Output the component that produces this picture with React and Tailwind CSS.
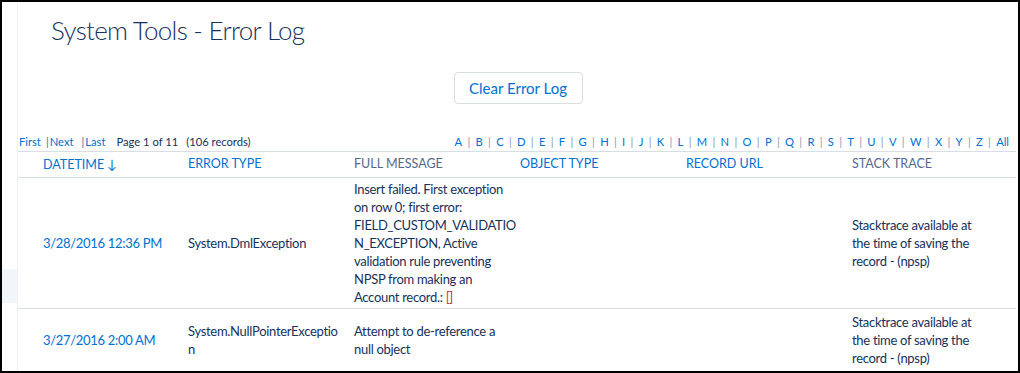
import React from "react";

const letters = "ABCDEFGHIJKLMNOPQRSTUVWXYZ".split("");

const rows = [
  {
    date: "3/28/2016 12:36 PM",
    type: "System.DmlException",
    trace: "Stacktrace available at the time of saving the record - (npsp)",
    pad: "py-[2px]",
  },
  {
    date: "3/27/2016 2:00 AM",
    type: "System.NullPointerException",
    message: "Attempt to de-reference a null object",
    trace: "Stacktrace available at the time of saving the record - (npsp)",
    pad: "py-[4px]",
  },
];

function App() {
  return (
    <div
      className="w-[1020px] h-[373px] border-2 border-black bg-white flex overflow-hidden text-[#16325c]"
      style={{ fontFamily: "Lato, 'Open Sans', sans-serif" }}
    >
      {/* left strip */}
      <div className="w-[16px] shrink-0 border-r border-[#eef1f6] flex flex-col">
        <div className="h-[267px]" />
        <div className="h-[34px] bg-[#f0f6fa]" />
      </div>

      <div className="flex-1 flex flex-col">
        <h1 className="pl-[33px] pt-[12px] text-[26px] leading-[32px] font-light tracking-[-0.7px] text-[#16325c]">
          System Tools - Error Log
        </h1>

        <div className="flex justify-center mt-[26px]">
          <button className="h-[32px] w-[129px] border border-[#d8dde6] rounded-[4px] text-[#0070d2] text-[15px] bg-white">
            Clear Error Log
          </button>
        </div>

        {/* pagination */}
        <div className="flex items-center justify-between mt-[30px] h-[17px] text-[11.2px] pl-px pr-[9px]">
          <div className="flex items-center">
            <span className="text-[#0070d2]">First</span>
            <span className="text-[#54698d] ml-[5px] mr-[1px]">|</span>
            <span className="text-[#0070d2]">Next</span>
            <span className="text-[#54698d] ml-[8px] mr-[1px]">|</span>
            <span className="text-[#0070d2]">Last</span>
            <span className="ml-[11px] text-[#16325c]">Page 1 of 11</span>
            <span className="ml-[8px] text-[#16325c]">(106 records)</span>
          </div>
          <div className="flex items-center text-[#0070d2]">
            {letters.map((l) => (
              <React.Fragment key={l}>
                <span>{l}</span>
                <span className="text-[#8a9ab4] mx-[5.3px]">|</span>
              </React.Fragment>
            ))}
            <span>All</span>
          </div>
        </div>

        {/* table */}
        <table className="w-[998px] border-collapse table-fixed text-[13px] leading-[18px] tracking-[-0.3px]">
          <colgroup>
            <col className="w-[162px]" />
            <col className="w-[166px]" />
            <col className="w-[166px]" />
            <col className="w-[166px]" />
            <col className="w-[166px]" />
            <col />
          </colgroup>
          <thead>
            <tr className="border-t border-b border-[#d8dde6] h-[26px] text-[12.5px] uppercase tracking-normal">
              <th className="text-left font-normal pl-[25px] text-[#0070d2]">
                Datetime <span className="text-[13px]">↓</span>
              </th>
              <th className="text-left font-normal pl-2 text-[#0070d2]">Error Type</th>
              <th className="text-left font-normal pl-2 text-[#54698d]">Full Message</th>
              <th className="text-left font-normal pl-2 text-[#0070d2]">Object Type</th>
              <th className="text-left font-normal pl-2 text-[#0070d2]">Record URL</th>
              <th className="text-left font-normal pl-2 text-[#54698d]">Stack Trace</th>
            </tr>
          </thead>
          <tbody>
            {rows.map((r, i) => (
              <tr key={i} className="border-b border-[#d8dde6]">
                <td className={`align-middle pl-[25px] text-[#0070d2] ${r.pad}`}>{r.date}</td>
                <td className={`align-middle pl-2 pr-[4px] break-words ${r.pad}`}>{r.type}</td>
                <td className={`align-middle pl-2 ${r.pad}`}>
                  <div className="w-[163px] break-words">
                    {i === 0 ? (
                      <>
                        Insert failed. First exception on row 0; first error:
                        FIELD_CUSTOM_VALIDATION_EXCEPTION, Active validation rule
                        preventing NPSP from making an Account record.:{" "}
                        <span className="text-[#c23934]">[]</span>
                      </>
                    ) : (
                      r.message
                    )}
                  </div>
                </td>
                <td />
                <td />
                <td className={`align-middle pl-2 pr-[30px] ${r.pad}`}>{r.trace}</td>
              </tr>
            ))}
          </tbody>
        </table>
      </div>
    </div>
  );
}

export default App;
